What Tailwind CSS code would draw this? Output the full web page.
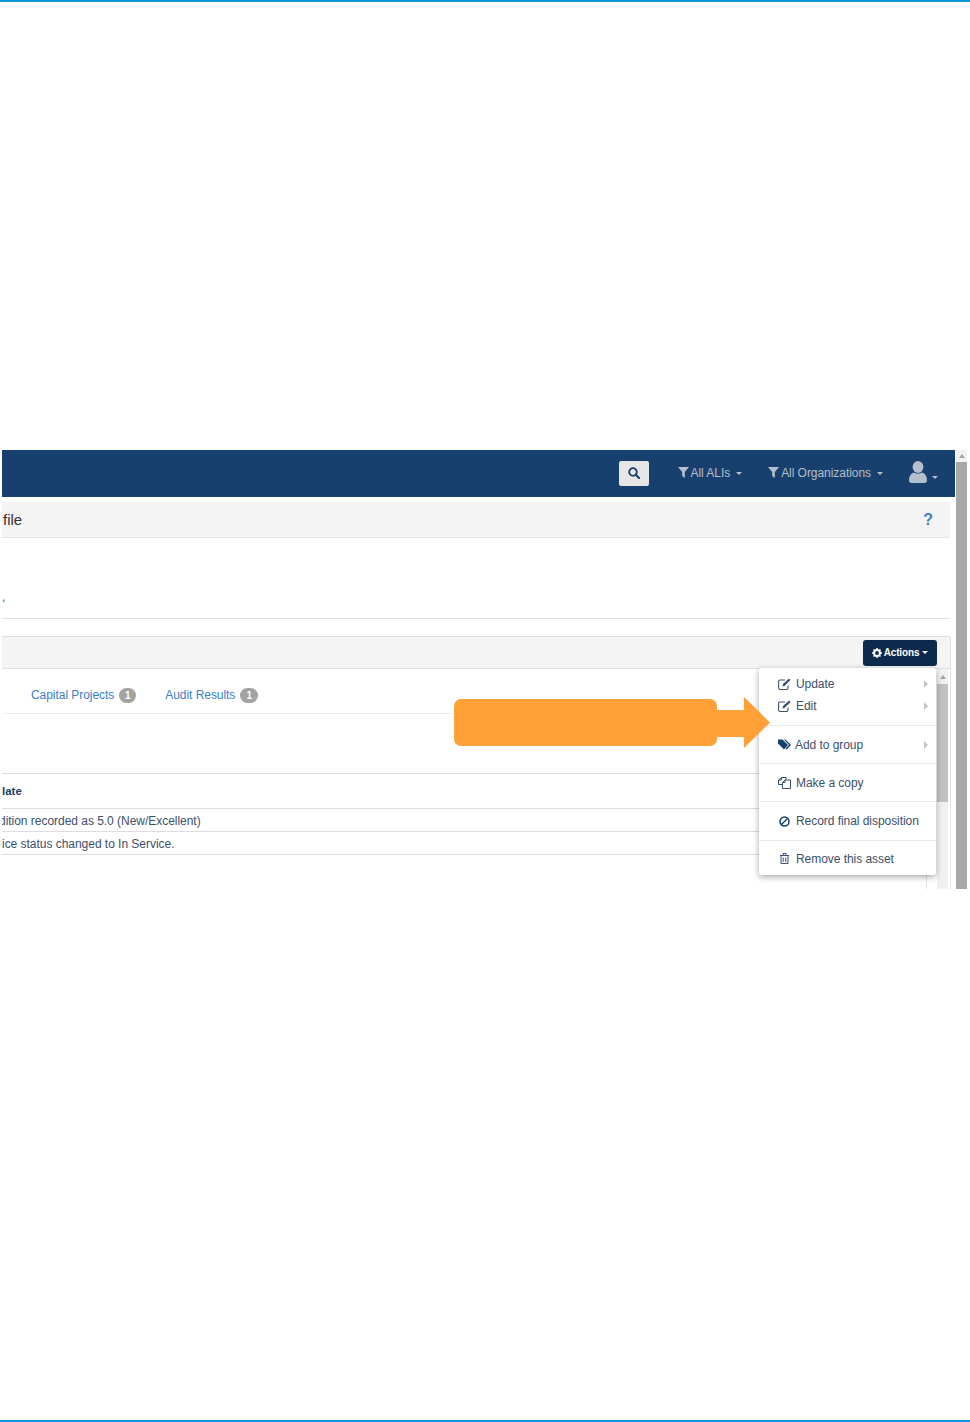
<!DOCTYPE html>
<html lang="en">

<head>
    <meta charset="UTF-8">
    <title>Asset Profile</title>
    <script src="https://cdn.jsdelivr.net/npm/@tailwindcss/browser@4"></script>
</head>

<body class="bg-white font-['Liberation_Sans',Arial,sans-serif]">
    <div class="relative flex flex-col h-[1422px] w-[970px] overflow-hidden">
        <div class="h-[2px] bg-[#0f95d9]"></div>

        <!-- Screenshot -->
        <div class="mt-[448px] ml-[2px] flex h-[439px] w-[966px] overflow-hidden">
            <div class="w-[953px] flex flex-col">
                <!-- Navbar -->
                <div class="h-[47px] bg-[#18406e] flex items-center justify-end text-[12px] tracking-[-0.05px] text-[#b4bfcc] shrink-0">
                    <div class="w-[30px] h-[25px] mr-[29px] mb-[1px] rounded-[2px] bg-[#e6e6e6] flex items-center justify-center">
                        <svg class="w-[12px] h-[12px]" viewBox="0 0 12 12" fill="none" stroke="#18406e" stroke-width="1.800"><circle cx="5" cy="5" r="3.800"/><path d="M7.800 7.800 11 11" stroke-linecap="round" stroke-width="2.200"/></svg>
                    </div>
                    <div class="flex items-center mr-[26px] mb-[2px]">
                        <svg class="w-[11px] h-[11px] mr-[2px]" viewBox="0 0 11 11" fill="#b4bfcc"><path d="M0 0h11L6.800 5v6L4.200 9V5z"/></svg>
                        <span>All ALIs</span>
                        <span class="ml-[6px] mt-[1px] border-x-[3.500px] border-x-transparent border-t-[3.500px] border-t-[#b4bfcc]"></span>
                    </div>
                    <div class="flex items-center mr-[26px] mb-[2px]">
                        <svg class="w-[11px] h-[11px] mr-[2px]" viewBox="0 0 11 11" fill="#b4bfcc"><path d="M0 0h11L6.800 5v6L4.200 9V5z"/></svg>
                        <span>All Organizations</span>
                        <span class="ml-[6px] mt-[1px] border-x-[3.500px] border-x-transparent border-t-[3.500px] border-t-[#b4bfcc]"></span>
                    </div>
                    <div class="flex items-end mr-[17px] mb-[4px]">
                        <svg class="w-[18px] h-[22px]" viewBox="0 0 18 22" fill="#b4bfcc"><ellipse cx="9" cy="6" rx="5.400" ry="6"/><path d="M0 19.500C0 15 2 12.500 5 11.500 7 13 11 13 13 11.500 16 12.500 18 15 18 19.500 18 21 17 22 15.500 22H2.500C1 22 0 21 0 19.500z"/></svg>
                        <span class="ml-[5px] mb-[4px] border-x-[3.500px] border-x-transparent border-t-[3.500px] border-t-[#b4bfcc]"></span>
                    </div>
                </div>

                <!-- Title bar -->
                <div class="mt-[5px] h-[36px] w-[948px] shrink-0 bg-[#f4f4f4] border-b border-[#e3e3e3] rounded-r-[3px] flex items-center justify-between pl-[1px] pt-[1px] text-[15px] text-[#333]">
                    <span>file</span>
                    <span class="mr-[17px] text-[16px] font-bold text-[#3a80c9]">?</span>
                </div>

                <div class="h-[81px] w-[948px] shrink-0 border-b border-[#e3e3e3] flex items-end pb-[14px] text-[12px] leading-[14px] text-[#555]">,</div>

                <!-- Panel heading -->
                <div class="mt-[17px] h-[33px] w-[949px] shrink-0 bg-[#f4f4f4] border-y border-[#dedede] border-r rounded-tr-[3px] flex items-center justify-end pr-[13px]">
                    <div class="h-[26px] w-[74px] rounded-[3px] bg-[#0d2a4c] flex items-center justify-center text-[10px] font-bold tracking-[-0.15px] text-white">
                        <svg class="w-[10px] h-[10px] mr-[2px]" viewBox="0 0 10 10"><circle cx="5" cy="5" r="2.900" fill="none" stroke="#fff" stroke-width="2"/><path d="M5 0v10M0 5h10M1.500 1.500l7 7M8.500 1.500l-7 7" stroke="#fff" stroke-width="1.500" stroke-dasharray="1.800 6.400"/></svg>
                        <span>Actions</span>
                        <span class="ml-[3px] border-x-[3.500px] border-x-transparent border-t-[3.500px] border-t-white"></span>
                    </div>
                </div>

                <!-- Body: table and inner scrollbar -->
                <div class="flex w-[949px] flex-1 min-h-0 border-r border-[#e3e3e3]">
                    <div class="w-[925px] flex flex-col border-r border-[#e3e3e3] overflow-hidden">
                        <div class="h-[45px] w-[924px] shrink-0 border-b border-[#eeeeee] flex items-center pl-[29px] pt-[8px] text-[12px] tracking-[-0.05px] text-[#3a80c9]">
                            <span>Capital Projects</span>
                            <span class="ml-[5px] w-[17px] h-[15px] rounded-full bg-[#a3a3a3] text-white text-[10px] font-bold flex items-center justify-center">1</span>
                            <span class="ml-[29px]">Audit Results</span>
                            <span class="ml-[5px] w-[18px] h-[15px] rounded-full bg-[#a3a3a3] text-white text-[10px] font-bold flex items-center justify-center">1</span>
                        </div>
                        <div class="mt-[59px] h-[36px] shrink-0 border-y border-[#dddddd] flex items-center pt-[1px] text-[11.500px] font-bold text-[#1c3d66]">late</div>
                        <div class="h-[23px] shrink-0 border-b border-[#dddddd] flex items-center pt-[1px] text-[12px] tracking-[-0.03px] text-[#3c4f6b]"><span class="-ml-[3px] whitespace-nowrap">dition recorded as 5.0 (New/Excellent)</span></div>
                        <div class="h-[23px] shrink-0 border-b border-[#dddddd] flex items-center pt-[1px] text-[12px] tracking-[-0.03px] text-[#3c4f6b]"><span class="whitespace-nowrap">ice status changed to In Service.</span></div>
                    </div>
                    <div class="ml-[10px] w-[11px] bg-[#f1f1f1] flex flex-col">
                        <div class="h-[15px] flex items-center justify-center"><span class="border-x-[3.500px] border-x-transparent border-b-[4px] border-b-[#a3a3a3]"></span></div>
                        <div class="h-[118px] bg-[#c1c1c1]"></div>
                    </div>
                </div>
            </div>

            <!-- Browser scrollbar -->
            <div class="ml-[1px] w-[11px] bg-[#f1f1f1] flex flex-col items-center">
                <div class="h-[12px] flex items-center justify-center"><span class="border-x-[3.500px] border-x-transparent border-b-[4px] border-b-[#a3a3a3]"></span></div>
                <div class="flex-1 w-[11px] bg-[#a8a8a8]"></div>
            </div>
        </div>

        <div class="flex-1"></div>
        <div class="h-[2px] bg-[#0f95d9]"></div>

        <!-- Actions menu -->
        <div class="absolute left-[759px] top-[668px] w-[177px] h-[207px] bg-white rounded-[3px] shadow-[0_2px_6px_rgba(0,0,0,0.35)] text-[12px] tracking-[-0.05px] text-[#3c4f6b]">
            <div class="h-[58px] border-b border-[#e8e8e8] pt-[5px]">
                <div class="h-[22px] flex items-center pl-[19px]">
                    <svg class="w-[13px] h-[12px] mr-[5px]" viewBox="0 0 13 12" fill="none" stroke="#3c4f6b" stroke-width="1.100"><path d="M10 7.500V10a1.500 1.500 0 0 1-1.500 1.500H2A1.500 1.500 0 0 1 .6 10V3.500A1.500 1.500 0 0 1 2 2h5"/><path d="M4.500 8.500 5 6l6-5.500 1.500 1.500-6 6z" fill="#3c4f6b" stroke="none"/></svg>
                    <span>Update</span>
                    <span class="ml-auto mr-[8px] border-y-[4px] border-y-transparent border-l-[4px] border-l-[#c4c4c4]"></span>
                </div>
                <div class="h-[22px] flex items-center pl-[19px]">
                    <svg class="w-[13px] h-[12px] mr-[5px]" viewBox="0 0 13 12" fill="none" stroke="#3c4f6b" stroke-width="1.100"><path d="M10 7.500V10a1.500 1.500 0 0 1-1.500 1.500H2A1.500 1.500 0 0 1 .6 10V3.500A1.500 1.500 0 0 1 2 2h5"/><path d="M4.500 8.500 5 6l6-5.500 1.500 1.500-6 6z" fill="#3c4f6b" stroke="none"/></svg>
                    <span>Edit</span>
                    <span class="ml-auto mr-[8px] border-y-[4px] border-y-transparent border-l-[4px] border-l-[#c4c4c4]"></span>
                </div>
            </div>
            <div class="h-[38px] border-b border-[#e8e8e8] flex items-center pl-[19px]">
                <svg class="w-[13px] h-[11px] mr-[4px]" viewBox="0 0 13 11" fill="#18406e"><path d="M0 .500h4.500L10 6 6 10.500 0 4.500z"/><path d="M6 .500h1.500L13 6l-4.500 4.500-1-1L11 6z"/></svg>
                <span>Add to group</span>
                <span class="ml-auto mr-[8px] border-y-[4px] border-y-transparent border-l-[4px] border-l-[#c4c4c4]"></span>
            </div>
            <div class="h-[38px] border-b border-[#e8e8e8] flex items-center pl-[19px]">
                <svg class="w-[13px] h-[12px] mr-[5px]" viewBox="0 0 13 12" fill="none" stroke="#3c4f6b" stroke-width="1"><path d="M.5 3 3.500.5H8V3M4.500 7.500H.5V3h3V.5"/><path d="M4.500 5.500 7 3h5.500v8.500h-8z"/><path d="M7 3v2.500H4.500"/></svg>
                <span>Make a copy</span>
            </div>
            <div class="h-[39px] border-b border-[#e8e8e8] flex items-center pl-[20px]">
                <svg class="w-[11px] h-[11px] mr-[6px]" viewBox="0 0 11 11" fill="none" stroke="#18406e" stroke-width="1.500"><circle cx="5.500" cy="5.500" r="4.500"/><path d="M2.500 8.500l6-6"/></svg>
                <span>Record final disposition</span>
            </div>
            <div class="h-[34px] flex items-center pl-[21px] pt-[1px]">
                <svg class="w-[9px] h-[11px] mr-[7px]" viewBox="0 0 9 11" fill="none" stroke="#3c4f6b" stroke-width="1"><path d="M0 2.500h9M3 2.500V.5h3v2M1 2.500v8h7v-8M3.200 4.500v4.500M5.800 4.500v4.500"/></svg>
                <span>Remove this asset</span>
            </div>
        </div>

        <!-- Callout arrow -->
        <svg class="absolute left-[454px] top-[697px]" width="316" height="52" viewBox="0 0 316 52" fill="#ffa136"><path d="M7 2H256a7 7 0 0 1 7 7V13H290V0L316 25.500 290 51V40H263V42a7 7 0 0 1-7 7H7a7 7 0 0 1-7-7V9A7 7 0 0 1 7 2z"/></svg>
    </div>
</body>

</html>
